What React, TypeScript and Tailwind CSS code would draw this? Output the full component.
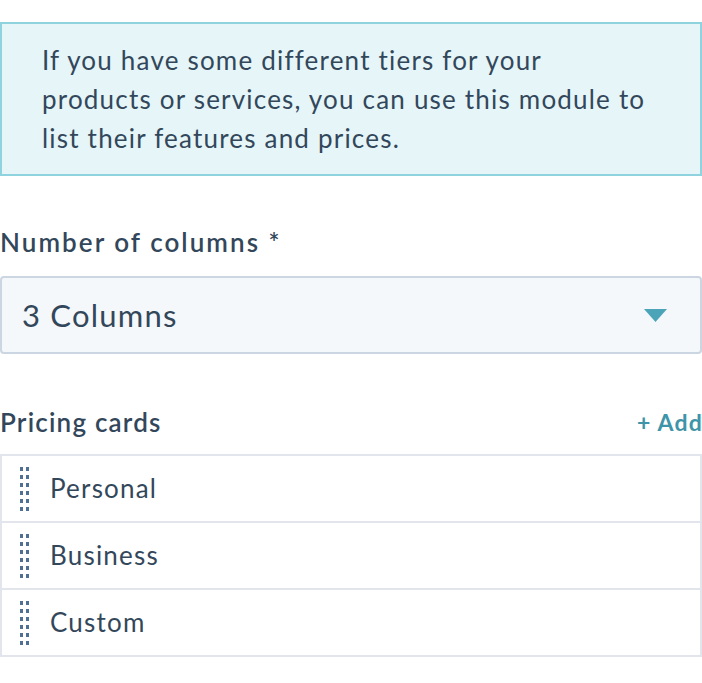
import React from 'react';

const font = { fontFamily: 'Lato, "Noto Sans", sans-serif' };

const DragHandle: React.FC = () => (
  <div className="grid grid-cols-2 gap-x-[3px] gap-y-[4px] w-[9px]">
    {Array.from({ length: 12 }).map((_, i) => (
      <span key={i} className="block w-[3px] h-[4px] bg-[#516f90]" />
    ))}
  </div>
);

const cards = ['Personal', 'Business', 'Custom'];

export default function App() {
  return (
    <div className="min-h-[683px] bg-white text-[#33475b] pt-[22px] tracking-[0.075em]" style={font}>
      <div className="border-2 border-[#8fd3de] bg-[#e5f5f8] pl-[40px] pr-2 pt-[17px] pb-[16px]">
        <p className="text-[26px] leading-[39px] whitespace-nowrap">
          If you have some different tiers for your
          <br />
          products or services, you can use this module to
          <br />
          list their features and prices.
        </p>
      </div>

      <div className="mt-[51px]">
        <label className="block text-[26px] leading-[30px] font-semibold tracking-[0.079em]">Number of columns *</label>
        <div className="mt-[19px] h-[78px] flex items-center justify-between rounded-[4px] border-2 border-[#cbd6e2] bg-[#f5f8fa] pl-[20px] pr-[33px]">
          <span className="text-[31px]">3 Columns</span>
          <svg width="23" height="13" viewBox="0 0 23 13">
            <path d="M0 0 H23 L11.5 13 Z" fill="#4ca4b8" />
          </svg>
        </div>
      </div>

      <div className="mt-[53px] flex items-center justify-between">
        <h3 className="text-[26px] leading-[30px] font-semibold">Pricing cards</h3>
        <button className="text-[23px] leading-[30px] font-bold text-[#3e94a8] -mr-[1px]">+ Add</button>
      </div>

      <ul className="mt-[17px] border-2 border-[#e2e6ec] border-b-0">
        {cards.map((c) => (
          <li key={c} className="h-[67px] flex items-center border-b-2 border-[#e2e6ec] pl-[18px] bg-white">
            <DragHandle />
            <span className="ml-[21px] text-[26px]">{c}</span>
          </li>
        ))}
      </ul>
    </div>
  );
}
